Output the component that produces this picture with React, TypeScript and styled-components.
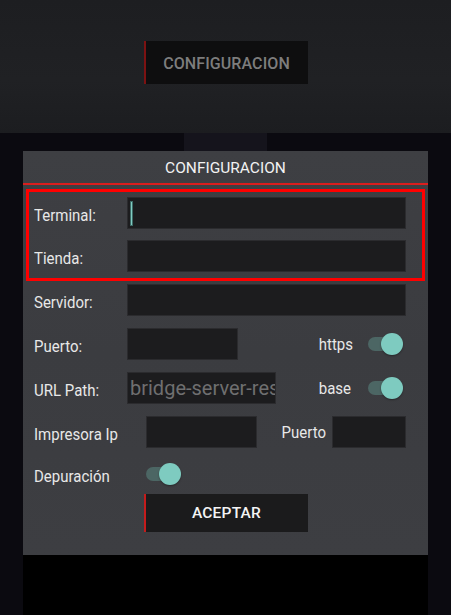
import React from "react";
import styled, { createGlobalStyle } from "styled-components";

const Global = createGlobalStyle`
  html, body { margin: 0; padding: 0; background: #0b0a10; }
  body { font-family: Roboto, "Noto Sans", "Liberation Sans", sans-serif; }
  * { box-sizing: border-box; }
`;

const Page = styled.div`
  width: 451px;
  height: 615px;
  overflow: hidden;
  display: flex;
  flex-direction: column;
  background: #0b0a10;
`;

const TopBar = styled.div`
  height: 133px;
  flex: none;
  background: linear-gradient(180deg, #1d1e21 0%, #202124 60%, #1c1d20 100%);
  display: flex;
  justify-content: center;
  padding-top: 41px;
`;

const TopButton = styled.div`
  width: 164px;
  height: 43px;
  background: #0e0e0f;
  border-left: 2px solid #7c1212;
  color: #7d7d7d;
  font-size: 16px;
  font-weight: 500;
  display: flex;
  align-items: center;
  justify-content: center;
  padding-top: 1px;
  letter-spacing: 0.1px;
`;

const Lower = styled.div`
  flex: 1;
  display: flex;
  flex-direction: column;
  align-items: center;
`;

const Tab = styled.div`
  width: 83px;
  height: 18px;
  background: #15141c;
  flex: none;
`;

const Dialog = styled.div`
  width: 405px;
  background: linear-gradient(180deg, #3e3f43 0%, #3b3c40 50%, #3d3e42 100%);
  display: flex;
  flex-direction: column;
  padding-bottom: 23px;
`;

const Header = styled.div`
  height: 32px;
  display: flex;
  align-items: center;
  justify-content: center;
  color: #f2f2f2;
  font-size: 15.5px;
  padding-top: 2px;
`;

const HeaderLine = styled.div`
  height: 2px;
  background: #d91e1e;
  margin-bottom: 4px;
`;

const Highlight = styled.div`
  margin: 0 3px 3px;
  border: 3px solid #ff0000;
  padding: 5px 0 6px;
  display: flex;
  flex-direction: column;
  gap: 11px;
`;

const Rows = styled.div`
  display: flex;
  flex-direction: column;
  gap: 12px;
`;

const Row = styled.div<{ $inBox?: boolean }>`
  display: flex;
  align-items: center;
  height: 32px;
  padding: ${(p) => (p.$inBox ? "0 16px 0 5px" : "0 22px 0 11px")};
`;

const Label = styled.div<{ $w?: number }>`
  width: ${(p) => p.$w ?? 93}px;
  flex: none;
  color: #e8e8e8;
  font-size: 15px;
  padding-top: 4px;
  transform: scaleY(1.13);
  transform-origin: left center;
`;

const SideLabel = styled.div`
  color: #e8e8e8;
  font-size: 15px;
  margin-left: auto;
  transform: scaleY(1.13);
`;

const Field = styled.div<{ $w?: number }>`
  height: 32px;
  ${(p) => (p.$w ? `width: ${p.$w}px; flex: none;` : "flex: 1;")}
  background: #1c1c1e;
  border: 1px solid #2b2b2e;
  display: flex;
  align-items: center;
  padding-left: 2px;
  overflow: hidden;
  white-space: nowrap;
  color: #6f6f70;
  font-size: 20px;
`;

const Cursor = styled.div`
  width: 3px;
  height: 25px;
  background: #80cbc2;
  border: 1px solid #3d6a65;
`;

const SwitchWrap = styled.div<{ $ml?: number }>`
  position: relative;
  width: 35px;
  height: 22px;
  flex: none;
  margin-left: ${(p) => p.$ml ?? 0}px;
`;

const Track = styled.div`
  position: absolute;
  left: 0;
  top: 4px;
  width: 28px;
  height: 14px;
  border-radius: 7px;
  background: #4c6664;
`;

const Thumb = styled.div`
  position: absolute;
  right: 0;
  top: 0;
  width: 22px;
  height: 22px;
  border-radius: 50%;
  background: #7ecbc0;
  box-shadow: 0 1px 2px rgba(0, 0, 0, 0.35);
`;

const Switch: React.FC<{ ml?: number }> = ({ ml }) => (
  <SwitchWrap $ml={ml}>
    <Track />
    <Thumb />
  </SwitchWrap>
);

const DebugRow = styled.div`
  display: flex;
  align-items: center;
  height: 28px;
  margin-top: 12px;
  padding-left: 11px;
`;

const AcceptRow = styled.div`
  display: flex;
  justify-content: center;
  margin-top: 6px;
`;

const AcceptButton = styled.div`
  width: 164px;
  height: 38px;
  background: #1b1b1c;
  border-left: 2px solid #c41c1c;
  color: #f4f4f4;
  font-size: 15.5px;
  font-weight: 500;
  display: flex;
  align-items: center;
  justify-content: center;
  letter-spacing: 0.2px;
`;

const Bottom = styled.div`
  width: 405px;
  flex: 1;
  background: #000000;
`;

const Spacer = styled.div`
  width: 3px;
  flex: none;
`;

export default function App() {
  return (
    <Page>
      <Global />
      <TopBar>
        <TopButton>CONFIGURACION</TopButton>
      </TopBar>
      <Lower>
        <Tab />
        <Dialog>
          <Header>CONFIGURACION</Header>
          <HeaderLine />
          <Highlight>
            <Row $inBox>
              <Label>Terminal:</Label>
              <Field>
                <Cursor />
              </Field>
            </Row>
            <Row $inBox>
              <Label>Tienda:</Label>
              <Field />
            </Row>
          </Highlight>
          <Rows>
            <Row>
              <Label>Servidor:</Label>
              <Field />
            </Row>
            <Row>
              <Label>Puerto:</Label>
              <Field $w={111} />
              <SideLabel>https</SideLabel>
              <Switch ml={15} />
              <Spacer />
            </Row>
            <Row>
              <Label>URL Path:</Label>
              <Field $w={149}>bridge-server-rest</Field>
              <SideLabel>base</SideLabel>
              <Switch ml={17} />
              <Spacer />
            </Row>
            <Row>
              <Label $w={112}>Impresora Ip</Label>
              <Field $w={111} />
              <SideLabel>Puerto</SideLabel>
              <Field $w={74} style={{ marginLeft: 6 }} />
            </Row>
          </Rows>
          <DebugRow>
            <Label $w={112}>Depuración</Label>
            <Switch />
          </DebugRow>
          <AcceptRow>
            <AcceptButton>ACEPTAR</AcceptButton>
          </AcceptRow>
        </Dialog>
        <Bottom />
      </Lower>
    </Page>
  );
}
